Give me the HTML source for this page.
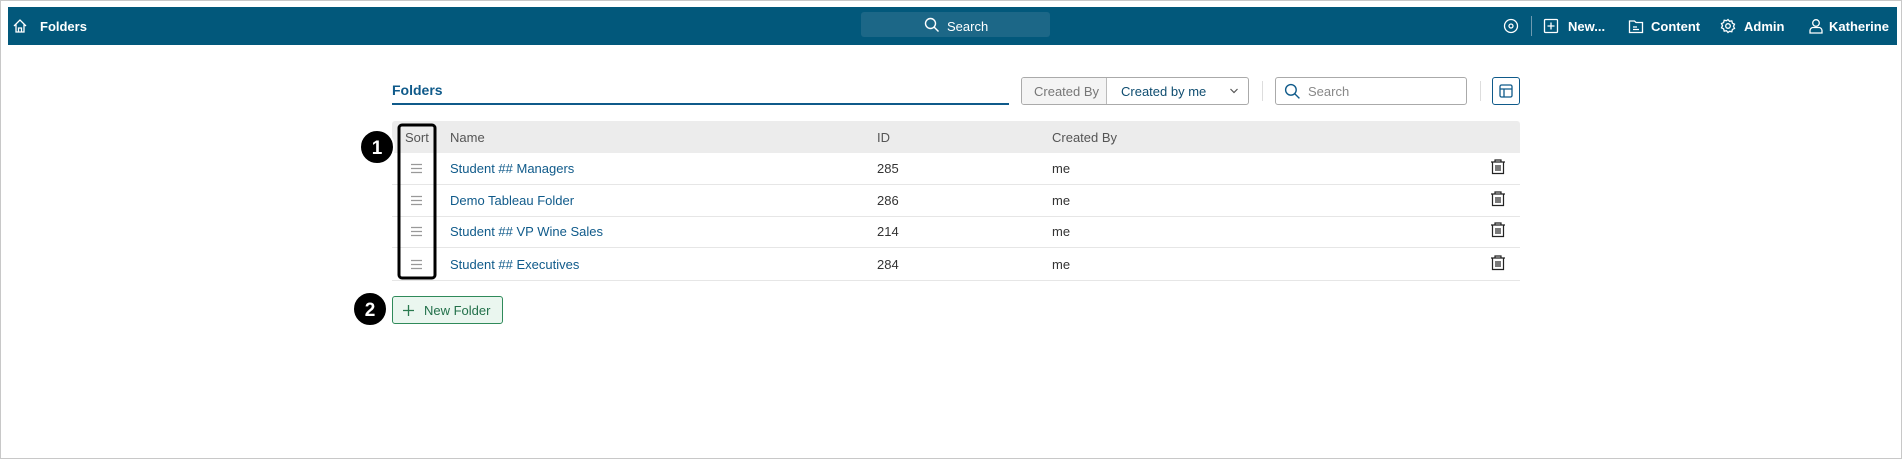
<!DOCTYPE html>
<html><head><style>
*{box-sizing:border-box;margin:0;padding:0}
body{width:1902px;height:459px;background:#fff;font-family:"Liberation Sans",sans-serif;position:relative;overflow:hidden;border:1px solid #c8c8c8}
.a{position:absolute}
.nav{left:7px;top:6px;width:1889px;height:38px;background:#02587b;color:#fff;font-size:13px;font-weight:bold}
.nav .t{position:absolute;top:12px}
.tx{font-size:13px;color:#333}
.lnk{color:#0f5a8a}
.row{left:391px;width:1128px;height:1px;background:#e6e6e6}
</style></head><body>
<div class="a nav">
 <svg class="a" style="left:4px;top:11px" width="16" height="16" viewBox="0 0 16 16" fill="none" stroke="#fff" stroke-width="1.3"><path d="M2 8L8 2l6 6M4 6.5V14h8V6.5M6.5 14v-4h3v4"/></svg>
 <span class="t" style="left:32px">Folders</span>
 <div class="a" style="left:853px;top:5px;width:189px;height:25px;background:#1c6787;border-radius:3px"></div>
 <svg class="a" style="left:916px;top:10px" width="16" height="16" viewBox="0 0 16 16" fill="none" stroke="#fff" stroke-width="1.4"><circle cx="6.5" cy="6.5" r="5"/><path d="M10 10l4.5 4.5"/></svg>
 <span class="t" style="left:939px;font-weight:normal">Search</span>
 <svg class="a" style="left:1495px;top:11px" width="16" height="16" viewBox="0 0 16 16" fill="none" stroke="#fff" stroke-width="1.3"><circle cx="8" cy="8" r="6.5"/><circle cx="8" cy="8" r="2"/></svg>
 <div class="a" style="left:1523px;top:9px;width:1px;height:20px;background:#6e9ab0"></div>
 <svg class="a" style="left:1535px;top:11px" width="16" height="16" viewBox="0 0 16 16" fill="none" stroke="#fff" stroke-width="1.3"><rect x="1.5" y="1.5" width="13" height="13" rx="1"/><path d="M8 4.5v7M4.5 8h7"/></svg>
 <span class="t" style="left:1560px">New...</span>
 <svg class="a" style="left:1620px;top:11px" width="16" height="16" viewBox="0 0 16 16" fill="none" stroke="#fff" stroke-width="1.3"><path d="M1.5 3h5l1.5 1.5h6.5v10h-13z"/><path d="M5 9h4M5 11.5h6"/></svg>
 <span class="t" style="left:1643px">Content</span>
 <svg class="a" style="left:1712px;top:11px" width="16" height="16" viewBox="0 0 16 16" fill="none" stroke="#fff" stroke-width="1.3"><circle cx="8" cy="8" r="2.3"/><path d="M8 1.5l1.5 1.8 2.3-.4.6 2.3 2.1 1-1 2.1 1 2.1-2.1 1-.6 2.3-2.3-.4L8 14.5l-1.5-1.8-2.3.4-.6-2.3-2.1-1 1-2.1-1-2.1 2.1-1 .6-2.3 2.3.4z"/></svg>
 <span class="t" style="left:1736px">Admin</span>
 <svg class="a" style="left:1800px;top:11px" width="16" height="16" viewBox="0 0 16 16" fill="none" stroke="#fff" stroke-width="1.3"><circle cx="8" cy="5" r="3.3"/><path d="M2 15v-2.5c0-1.5 1.5-3 3-3h6c1.5 0 3 1.5 3 3V15z"/></svg>
 <span class="t" style="left:1821px">Katherine</span>
</div>

<div class="a" style="left:391px;top:81px;font-size:14px;font-weight:bold;color:#0f5a8a">Folders</div>
<div class="a" style="left:391px;top:102px;width:617px;height:2px;background:#0f5a8a"></div>

<div class="a" style="left:1020px;top:76px;width:228px;height:28px;border:1px solid #aaa;border-radius:3px;overflow:hidden">
 <div class="a" style="left:0;top:0;width:85px;height:26px;background:#f4f4f4;border-right:1px solid #bbb;font-size:13px;color:#777;padding:6px 0 0 12px">Created By</div>
 <div class="a" style="left:99px;top:6px;font-size:13px;color:#0f4d70">Created by me</div>
 <svg class="a" style="left:207px;top:9px" width="10" height="8" viewBox="0 0 10 8" fill="none" stroke="#555" stroke-width="1.2"><path d="M1.5 2l3.5 3.5L8.5 2"/></svg>
</div>
<div class="a" style="left:1261px;top:80px;width:1px;height:20px;background:#ddd"></div>
<div class="a" style="left:1274px;top:76px;width:192px;height:28px;border:1px solid #aaa;border-radius:3px"></div>
<svg class="a" style="left:1283px;top:82px" width="17" height="17" viewBox="0 0 16 16" fill="none" stroke="#0f5a8a" stroke-width="1.3"><circle cx="6.5" cy="6.5" r="5"/><path d="M10 10l4.5 4.5"/></svg>
<div class="a" style="left:1307px;top:83px;font-size:13px;color:#888">Search</div>
<div class="a" style="left:1479px;top:80px;width:1px;height:20px;background:#ddd"></div>
<div class="a" style="left:1491px;top:76px;width:28px;height:28px;border:1.5px solid #0f5a8a;border-radius:3px"></div>
<svg class="a" style="left:1498px;top:83px" width="14" height="14" viewBox="0 0 14 14" fill="none" stroke="#0f5a8a" stroke-width="1.3"><rect x="1" y="1" width="12" height="12" rx="1.5"/><path d="M1 5h12M5 5v8"/></svg>

<div class="a" style="left:391px;top:120px;width:1128px;height:32px;background:#ececec;border-radius:3px 3px 0 0"></div>
<div class="a tx" style="left:404px;top:129px;color:#555">Sort</div>
<div class="a tx" style="left:449px;top:129px;color:#555">Name</div>
<div class="a tx" style="left:876px;top:129px;color:#555">ID</div>
<div class="a tx" style="left:1051px;top:129px;color:#555">Created By</div>

<div class="a row" style="top:183px"></div>
<div class="a row" style="top:215px"></div>
<div class="a row" style="top:246px"></div>
<div class="a row" style="top:279px"></div>

<div class="a tx lnk" style="left:449px;top:160px">Student ## Managers</div>
<div class="a tx" style="left:876px;top:160px">285</div>
<div class="a tx" style="left:1051px;top:160px">me</div>
<div class="a tx lnk" style="left:449px;top:192px">Demo Tableau Folder</div>
<div class="a tx" style="left:876px;top:192px">286</div>
<div class="a tx" style="left:1051px;top:192px">me</div>
<div class="a tx lnk" style="left:449px;top:223px">Student ## VP Wine Sales</div>
<div class="a tx" style="left:876px;top:223px">214</div>
<div class="a tx" style="left:1051px;top:223px">me</div>
<div class="a tx lnk" style="left:449px;top:256px">Student ## Executives</div>
<div class="a tx" style="left:876px;top:256px">284</div>
<div class="a tx" style="left:1051px;top:256px">me</div>

<svg class="a" style="left:0;top:0" width="1902" height="459">
 <g stroke="#999" stroke-width="1.2">
  <path d="M410 163.5h11M410 167.5h11M410 171.5h11"/>
  <path d="M410 195.5h11M410 199.5h11M410 203.5h11"/>
  <path d="M410 226.5h11M410 230.5h11M410 234.5h11"/>
  <path d="M410 259.5h11M410 263.5h11M410 267.5h11"/>
 </g>
 <g fill="none" stroke="#222" stroke-width="1.2">
  <g id="tr"><path d="M1490 161h14M1494 161v-2h6v2M1491.5 161v11.5h11V161M1495 164v6M1497 164v6M1499 164v6"/></g>
  <use href="#tr" y="32"/><use href="#tr" y="63"/><use href="#tr" y="96"/>
 </g>
 <rect x="398" y="124" width="36" height="153" rx="3" fill="none" stroke="#000" stroke-width="3"/>
 <circle cx="376" cy="146" r="17" fill="#000" stroke="#fff" stroke-width="2"/>
 <text x="376" y="153" fill="#fff" font-family="Liberation Sans" font-weight="bold" font-size="19" text-anchor="middle">1</text>
 <circle cx="369" cy="308" r="17" fill="#000" stroke="#fff" stroke-width="2"/>
 <text x="369" y="315" fill="#fff" font-family="Liberation Sans" font-weight="bold" font-size="19" text-anchor="middle">2</text>
</svg>

<div class="a" style="left:391px;top:295px;width:111px;height:28px;border:1px solid #2f8a5a;background:#eaf6ef;border-radius:3px"></div>
<svg class="a" style="left:401px;top:303px" width="13" height="13" viewBox="0 0 13 13" stroke="#2a7a4f" stroke-width="1.3"><path d="M6.5 1v11M1 6.5h11"/></svg>
<div class="a" style="left:423px;top:302px;font-size:13px;color:#22704a">New Folder</div>
</body></html>
